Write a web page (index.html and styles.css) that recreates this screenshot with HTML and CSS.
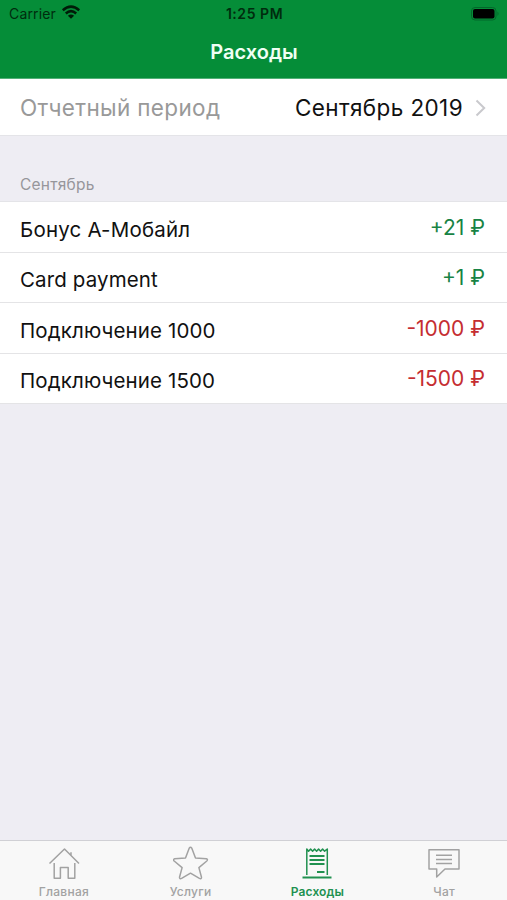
FILE: index.html
```html
<!DOCTYPE html>
<html lang="ru">
<head>
<meta charset="utf-8">
<title>Расходы</title>
<link rel="stylesheet" href="styles.css">
</head>
<body>
<div class="app">
  <header class="header">
    <div class="status">
      <div class="carrier"><span>Carrier</span>
        <svg class="wifi" width="20" height="14" viewBox="0 0 20 14"><path d="M1.8 5.2Q10-1.8 18.2 5.2M4.8 8.4q5.2-4.4 10.4 0" fill="none" stroke="currentColor" stroke-width="2.6"/><path d="M10 13.7 6.9 10.7q3.1-2.5 6.2 0z" fill="currentColor"/></svg>
      </div>
      <time class="time">1:25 PM</time>
      <svg class="battery" width="29" height="14" viewBox="0 0 29 14"><rect x=".5" y=".5" width="24.5" height="12.5" rx="3.5" fill="none" stroke="#03682a"/><rect x="2" y="2" width="21.5" height="9.5" rx="2" fill="#000"/><path d="M26.5 4.5q2 2.2 0 4.4z" fill="#03682a"/></svg>
    </div>
    <h1 class="title">Расходы</h1>
  </header>
  <main class="content">
    <div class="period">
      <span class="period-label">Отчетный период</span>
      <span class="period-value">Сентябрь 2019</span>
      <svg class="chevron" width="11" height="18" viewBox="0 0 11 18"><path d="m1.5 1.5 7.7 7.5-7.7 7.5" fill="none" stroke="#c9c9cd" stroke-width="2"/></svg>
    </div>
    <h2 class="section">Сентябрь</h2>
    <ul class="list">
      <li class="row"><span class="name bonus">Бонус А-Мобайл</span><span class="amount plus">+21 ₽</span></li>
      <li class="row"><span class="name">Card payment</span><span class="amount plus">+1 ₽</span></li>
      <li class="row"><span class="name">Подключение 1000</span><span class="amount minus">-1000 ₽</span></li>
      <li class="row"><span class="name">Подключение 1500</span><span class="amount minus">-1500 ₽</span></li>
    </ul>
  </main>
  <nav class="tabs">
    <a class="tab"><svg width="36" height="36" viewBox="0 0 36 36"><path d="M3.5 18.5 18.5 4 33 18.5M25 10.5V7.2M8.2 18v15.3h6.2V22.5h7.8v10.8h6.6V18"/></svg><span>Главная</span></a>
    <a class="tab"><svg width="36" height="36" viewBox="0 0 36 36"><path d="M16.2 3.2q1.3-1.7 2.6 0L22.5 13l10.8.8q2 .7.5 2.2l-7.9 6.6 2.6 9.6q0 2.2-2.1 1.2l-8.9-5.2-8.9 5.2q-2.1 1-2.1-1.2l2.6-9.6L1.2 16q-1.5-1.5.5-2.2l10.8-.8z"/></svg><span>Услуги</span></a>
    <a class="tab active"><svg width="36" height="36" viewBox="0 0 36 36"><path d="M7.8 30V4l1.8 2.2 2-2.2 2 2.2 2-2.2 2 2.2 2-2.2 2 2.2 2-2.2 2 2.2L28.3 4v26"/><path class="thick" d="M10.5 11h15M10.5 15h15M10.5 19h15M18 27h7.5M3.5 32.5h29"/></svg><span>Расходы</span></a>
    <a class="tab"><svg width="36" height="36" viewBox="0 0 36 36"><path d="M3 4.7h30v19.3H19L10.7 32v-8H3zM10 10.2h16M10 14.4h16M10 18.6h16"/></svg><span>Чат</span></a>
  </nav>
</div>
</body>
</html>
```
FILE: styles.css
```css
* { box-sizing: border-box; }
body { margin: 0; font-family: Inter, "Liberation Sans", sans-serif; color: #111; }
h1, h2, ul { margin: 0; padding: 0; }
.app { height: 900px; display: flex; flex-direction: column; background: #eeedf3; }
.header { height: 79px; background: #058d38; border-bottom: 1px solid #52b077; }
.status { height: 27px; display: grid; grid-template-columns: 1fr auto 1fr; align-items: center; padding: 0 8px 0 9px; color: #002c0e; font-size: 14px; }
.carrier { display: flex; align-items: center; gap: 5px; letter-spacing: .15px; }
.wifi { margin-top: -3px; color: #001c08; }
.time { font-weight: 600; font-size: 14px; letter-spacing: .55px; margin-right: -1px; }
.battery { justify-self: end; margin-right: -1px; }
.title { height: 50px; line-height: 51px; text-align: center; color: #f0fff4; font-size: 20px; font-weight: 600; padding-left: 1px; }
.content { flex: 1; }
.period { height: 57px; display: flex; align-items: center; background: #fff; border-bottom: 1px solid #e4e4e8; padding: 1px 21px 0; font-size: 22.5px; }
.period-label { color: #999; letter-spacing: .35px; margin-left: -1px; }
.period-value { margin-left: auto; margin-right: 12px; letter-spacing: .4px; }
.section { height: 66px; padding: 40px 21px 0 20px; line-height: 18px; font-size: 15.5px; font-weight: 400; color: #96969b; letter-spacing: .25px; border-bottom: 1px solid #e4e4e8; }
.list { list-style: none; }
.row { height: 50.5px; display: flex; align-items: center; justify-content: space-between; padding: 5px 22px 0 20px; background: #fff; border-bottom: 1px solid #e4e4e6; font-size: 20.5px; }
.name { letter-spacing: .12px; }
.bonus { letter-spacing: .2px; }
.amount { margin-top: -4px; font-size: 21px; }
.plus { color: #188344; }
.minus { color: #c52d31; }
.tabs { height: 60px; display: flex; background: #f8f8f8; border-top: 1px solid #d0d0d5; }
.tab { flex: 1; display: flex; flex-direction: column; align-items: center; padding: 4px 0 0 1px; color: #a2a2a2; font-size: 12px; font-weight: 500; line-height: 15px; letter-spacing: .25px; }
.tab svg { fill: none; stroke: currentColor; stroke-width: 1.5; stroke-linejoin: round; margin-bottom: 3px; }
.tab .thick { stroke-width: 1.8; }
.active { color: #219150; font-weight: 600; letter-spacing: .1px; }
```
